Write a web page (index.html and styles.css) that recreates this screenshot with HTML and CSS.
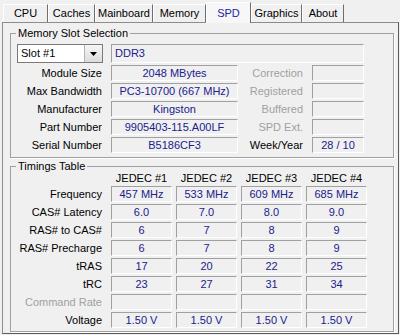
FILE: index.html
```html
<html>

<head>
    <link rel="stylesheet" href="styles.css">
</head>

<body>

    <div class="tabs">
        <div class="tab tab-cpu">CPU</div>
        <div class="tab tab-caches">Caches</div>
        <div class="tab tab-mainboard">Mainboard</div>
        <div class="tab tab-memory">Memory</div>
        <div class="tab tab-spd active">SPD</div>
        <div class="tab tab-graphics">Graphics</div>
        <div class="tab tab-about">About</div>
    </div>

    <div class="page">

        <fieldset class="group slot-group">
            <legend>Memory Slot Selection</legend>
            <div class="slot-grid">
                <div class="combo">
                    <span class="combo-text">Slot #1</span>
                    <span class="combo-btn">
                        <svg width="7" height="4" viewBox="0 0 7 4"><polygon points="0,0 7,0 3.5,4" fill="#000" /></svg>
                    </span>
                </div>
                <div class="field wide">DDR3</div>

                <div class="label">Module Size</div>
                <div class="field">2048 MBytes</div>
                <div class="label off">Correction</div>
                <div class="field"></div>

                <div class="label">Max Bandwidth</div>
                <div class="field">PC3-10700 (667 MHz)</div>
                <div class="label off">Registered</div>
                <div class="field"></div>

                <div class="label">Manufacturer</div>
                <div class="field">Kingston</div>
                <div class="label off">Buffered</div>
                <div class="field"></div>

                <div class="label">Part Number</div>
                <div class="field">9905403-115.A00LF</div>
                <div class="label off">SPD Ext.</div>
                <div class="field"></div>

                <div class="label">Serial Number</div>
                <div class="field">B5186CF3</div>
                <div class="label">Week/Year</div>
                <div class="field">28 / 10</div>
            </div>
        </fieldset>

        <fieldset class="group timing-group">
            <legend>Timings Table</legend>
            <div class="timing-grid">
                <div></div>
                <div class="head">JEDEC #1</div>
                <div class="head">JEDEC #2</div>
                <div class="head">JEDEC #3</div>
                <div class="head">JEDEC #4</div>

                <div class="label">Frequency</div>
                <div class="field">457 MHz</div>
                <div class="field">533 MHz</div>
                <div class="field">609 MHz</div>
                <div class="field">685 MHz</div>

                <div class="label">CAS# Latency</div>
                <div class="field">6.0</div>
                <div class="field">7.0</div>
                <div class="field">8.0</div>
                <div class="field">9.0</div>

                <div class="label">RAS# to CAS#</div>
                <div class="field">6</div>
                <div class="field">7</div>
                <div class="field">8</div>
                <div class="field">9</div>

                <div class="label">RAS# Precharge</div>
                <div class="field">6</div>
                <div class="field">7</div>
                <div class="field">8</div>
                <div class="field">9</div>

                <div class="label">tRAS</div>
                <div class="field">17</div>
                <div class="field">20</div>
                <div class="field">22</div>
                <div class="field">25</div>

                <div class="label">tRC</div>
                <div class="field">23</div>
                <div class="field">27</div>
                <div class="field">31</div>
                <div class="field">34</div>

                <div class="label off">Command Rate</div>
                <div class="field"></div>
                <div class="field"></div>
                <div class="field"></div>
                <div class="field"></div>

                <div class="label">Voltage</div>
                <div class="field">1.50 V</div>
                <div class="field">1.50 V</div>
                <div class="field">1.50 V</div>
                <div class="field">1.50 V</div>
            </div>
        </fieldset>

    </div>

</body>

</html>
```

FILE: styles.css
```css
body {
    margin: 0;
    width: 400px;
    height: 335px;
    overflow: hidden;
    background-color: #f0f0f0;
    font-family: "Liberation Sans", Arial, sans-serif;
    font-size: 11px;
    color: #000;
}

/* Tab strip */
.tabs {
    display: flex;
    align-items: flex-end;
    height: 22px;
    padding-left: 3px;
    box-sizing: border-box;
}

.tab {
    box-sizing: border-box;
    flex-shrink: 0;
    height: 18px;
    line-height: 17px;
    text-align: center;
    border-top: 1px solid #fff;
    border-left: 1px solid #fff;
    border-right: 1px solid #6e6e6e;
}

.tab.active {
    position: relative;
    z-index: 1;
    height: 21px;
    margin-bottom: -1px;
    line-height: 20px;
    background-color: #f7f7f7;
    color: #2323a8;
}

.tab-cpu { width: 45px; }
.tab-caches { width: 47px; }
.tab-mainboard { width: 58px; }
.tab-memory { width: 53px; }
.tab-spd { width: 45px; }
.tab-graphics { width: 51px; }
.tab-about { width: 42px; }

/* Tab page */
.page {
    box-sizing: border-box;
    width: 397px;
    height: 312px;
    margin-left: 2px;
    padding-left: 7px;
    border: 1px solid #8c8c8c;
    border-right-color: #5a5a5a;
    border-bottom-color: #5a5a5a;
}

/* Group boxes */
.group {
    box-sizing: border-box;
    width: 384px;
    min-width: 0;
    margin: 4px 0 0 0;
    padding: 0 0 4px 0;
    border: 1px solid #a0a0a0;
    box-shadow: 1px 1px 0 #fff;
}

.group legend {
    margin-left: 5px;
    padding: 0 2px;
    line-height: 13px;
}

.timing-group {
    margin-top: 2px;
    padding-bottom: 3px;
}

/* Memory slot section */
.slot-grid {
    display: grid;
    grid-template-columns: 100px 127px 74px 52px;
    grid-template-rows: 19px;
    grid-auto-rows: 16px;
    row-gap: 2px;
    margin-top: 4px;
}

.label {
    padding-right: 9px;
    line-height: 16px;
    text-align: right;
    white-space: nowrap;
}

.label.off {
    color: #a0a0a0;
}

.field {
    box-sizing: border-box;
    border: 1px solid;
    border-color: #a0a0a0 #fff #fff #a0a0a0;
    line-height: 14px;
    text-align: center;
    white-space: nowrap;
    color: #20208c;
}

.field.wide {
    grid-column: 2 / 5;
    padding-left: 3px;
    line-height: 17px;
    text-align: left;
}

.combo {
    box-sizing: border-box;
    display: flex;
    margin: 0 8px 0 6px;
    border: 1px solid #7a7a7a;
    background-color: #fff;
}

.combo-text {
    flex: 1;
    padding-left: 3px;
    line-height: 17px;
}

.combo-btn {
    display: flex;
    align-items: center;
    justify-content: center;
    width: 17px;
    border-left: 1px solid #b4b4b4;
    background: linear-gradient(#f6f6f6, #dcdcdc);
}

/* Timings table */
.timing-grid {
    display: grid;
    grid-template-columns: 96px repeat(4, 61px);
    grid-template-rows: 11px;
    grid-auto-rows: 16px;
    column-gap: 4px;
    row-gap: 2px;
}

.timing-grid .label {
    padding-right: 5px;
}

.head {
    line-height: 11px;
    text-align: center;
}
```
